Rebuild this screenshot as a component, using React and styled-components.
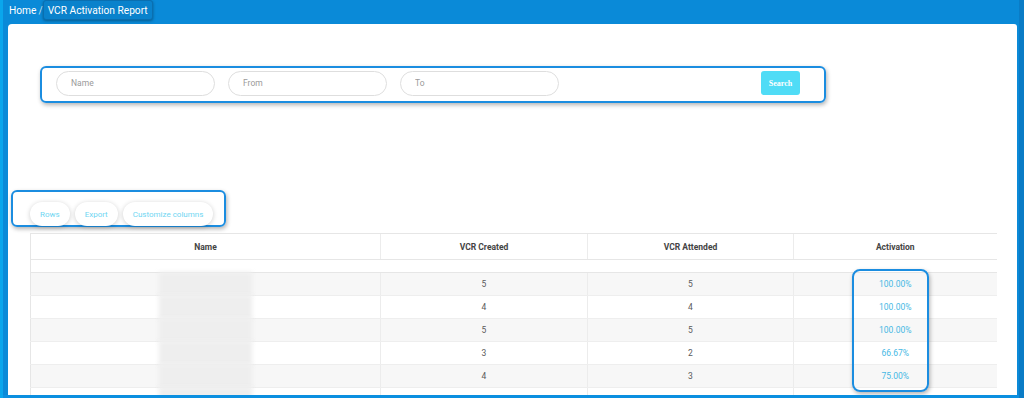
import React from 'react';
import styled, { createGlobalStyle } from 'styled-components';

const GlobalStyle = createGlobalStyle`
  html, body {
    margin: 0;
    padding: 0;
    background: #0a8ad8;
    font-family: Roboto, "Liberation Sans", sans-serif;
  }
`;

// outer blue frame of the screenshot
const Frame = styled.div`
  width: 1024px;
  height: 398px;
  box-sizing: border-box;
  overflow: hidden;
  display: flex;
  flex-direction: column;
  padding: 0 7px 3px 8px;
  background: #0a8ad8;
  box-shadow: inset 3px 0 0 #0aa6ec, inset -5px 0 0 #0a7cc6, inset 0 -3px 0 #0b8fe0;
`;

const Breadcrumb = styled.div`
  height: 24px;
  flex-shrink: 0;
  display: flex;
  align-items: flex-start;
  color: #fff;
  font-size: 10.2px;
  line-height: 15px;
  padding-top: 3px;
  box-sizing: border-box;
`;

const Crumb = styled.span`
  padding-left: 1px;
`;

const Slash = styled.span`
  color: #c8e4f6;
  margin: 0 0 0 2px;
`;

const CurrentCrumb = styled.span`
  margin-top: -3px;
  padding: 2px 4px 1px 4px;
  border: 1px solid #0a6fb0;
  border-radius: 3px;
  background: #0a82cc;
  box-shadow: 0 1px 3px rgba(0, 0, 0, 0.35);
`;

const Card = styled.div`
  flex: 1;
  background: #fff;
  border-radius: 4px 3px 0 0;
  display: flex;
  flex-direction: column;
  padding: 42px 21px 0 3px;
  overflow: hidden;
`;

const Highlight = styled.div`
  flex-shrink: 0;
  border: 2px solid #1b8de0;
  border-radius: 6px;
  box-shadow: 1px 2px 4px rgba(0, 0, 0, 0.3);
  box-sizing: border-box;
`;

const FilterBar = styled(Highlight)`
  margin-left: 29px;
  width: 786px;
  height: 37px;
  display: flex;
  align-items: center;
  justify-content: space-between;
  padding: 0 24px 3px 14px;
`;

const Inputs = styled.div`
  display: flex;
  gap: 13px;
`;

const Input = styled.input`
  width: 159px;
  height: 25px;
  box-sizing: border-box;
  border: 1px solid #dedede;
  border-radius: 13px;
  padding: 0 14px;
  font-family: Roboto, "Liberation Sans", sans-serif;
  font-size: 8.5px;
  outline: none;
  &::placeholder {
    color: #9a9a9a;
  }
`;

const SearchButton = styled.button`
  width: 39px;
  height: 24px;
  border: none;
  border-radius: 3px;
  background: #50dcf6;
  color: #fff;
  font-family: "Liberation Serif", serif;
  font-weight: bold;
  font-size: 8px;
  padding: 0;
`;

const ActionBar = styled(Highlight)`
  margin-top: 87px;
  width: 215px;
  height: 37px;
  display: flex;
  align-items: flex-end;
  gap: 5px;
  padding: 0 0 0 17px;
`;

const ActionButton = styled.button`
  height: 24px;
  border: none;
  border-radius: 12px;
  background: #fff;
  box-shadow: 0 1px 5px rgba(0, 0, 0, 0.2);
  color: #6fd6f2;
  font-family: Roboto, "Liberation Sans", sans-serif;
  font-size: 8px;
  padding: 0 10px;
  margin-bottom: -1px;
`;

const TableWrap = styled.div`
  flex-shrink: 0;
  position: relative;
  margin: 6px 0 0 19px;
`;

const Table = styled.table`
  width: 966px;
  border-collapse: collapse;
  table-layout: fixed;
  font-size: 8.5px;
  color: #555;
`;

const Th = styled.th`
  height: 25px;
  padding: 0;
  font-weight: bold;
  font-size: 8.5px;
  color: #444;
  border-top: 1px solid #e6e6e6;
  border-bottom: 1px solid #e6e6e6;
  border-left: 1px solid #ececec;
  &:first-child { border-left: 1px solid #e6e6e6; }
`;

const SpacerCell = styled.td`
  height: 12px;
  padding: 0;
  border-bottom: 1px solid #e6e6e6;
  border-left: 1px solid #e6e6e6;
`;

const Row = styled.tr`
  background: ${p => (p.$odd ? '#f7f7f7' : '#fff')};
`;

const Td = styled.td`
  height: 22px;
  padding: 0;
  text-align: center;
  border-bottom: 1px solid #eeeeee;
  border-left: 1px solid #ececec;
  color: ${p => (p.$accent ? '#45b8e4' : '#5a5a5a')};
  &:first-child { border-left: 1px solid #e6e6e6; }
`;

const BlurredName = styled.div`
  width: 93px;
  height: 24px;
  margin: -1px auto;
  background: #eeeeee;
  filter: blur(2px);
`;

const ActivationMark = styled.div`
  position: absolute;
  left: 822px;
  top: 36px;
  width: 77px;
  height: 123px;
  border: 2px solid #1b8de0;
  border-radius: 8px;
  box-shadow: 1px 2px 4px rgba(0, 0, 0, 0.3);
  box-sizing: border-box;
`;

const rows = [
  { created: 5, attended: 5, activation: '100.00%' },
  { created: 4, attended: 4, activation: '100.00%' },
  { created: 5, attended: 5, activation: '100.00%' },
  { created: 3, attended: 2, activation: '66.67%' },
  { created: 4, attended: 3, activation: '75.00%' },
  { created: '', attended: '', activation: '' },
];

export default function App() {
  return (
    <>
      <GlobalStyle />
      <Frame>
        <Breadcrumb>
          <Crumb>Home</Crumb>
          <Slash>/</Slash>
          <CurrentCrumb>VCR Activation Report</CurrentCrumb>
        </Breadcrumb>
        <Card>
          <FilterBar>
            <Inputs>
              <Input placeholder="Name" />
              <Input placeholder="From" />
              <Input placeholder="To" />
            </Inputs>
            <SearchButton>Search</SearchButton>
          </FilterBar>

          <ActionBar>
            <ActionButton>Rows</ActionButton>
            <ActionButton>Export</ActionButton>
            <ActionButton>Customize columns</ActionButton>
          </ActionBar>

          <TableWrap>
            <Table>
              <colgroup>
                <col style={{ width: 350 }} />
                <col style={{ width: 207 }} />
                <col style={{ width: 206 }} />
                <col style={{ width: 203 }} />
              </colgroup>
              <thead>
                <tr>
                  <Th>Name</Th>
                  <Th>VCR Created</Th>
                  <Th>VCR Attended</Th>
                  <Th>Activation</Th>
                </tr>
              </thead>
              <tbody>
                <tr>
                  <SpacerCell colSpan={4} />
                </tr>
                {rows.map((r, i) => (
                  <Row key={i} $odd={i % 2 === 0}>
                    <Td><BlurredName /></Td>
                    <Td>{r.created}</Td>
                    <Td>{r.attended}</Td>
                    <Td $accent>{r.activation}</Td>
                  </Row>
                ))}
              </tbody>
            </Table>
            <ActivationMark />
          </TableWrap>
        </Card>
      </Frame>
    </>
  );
}
